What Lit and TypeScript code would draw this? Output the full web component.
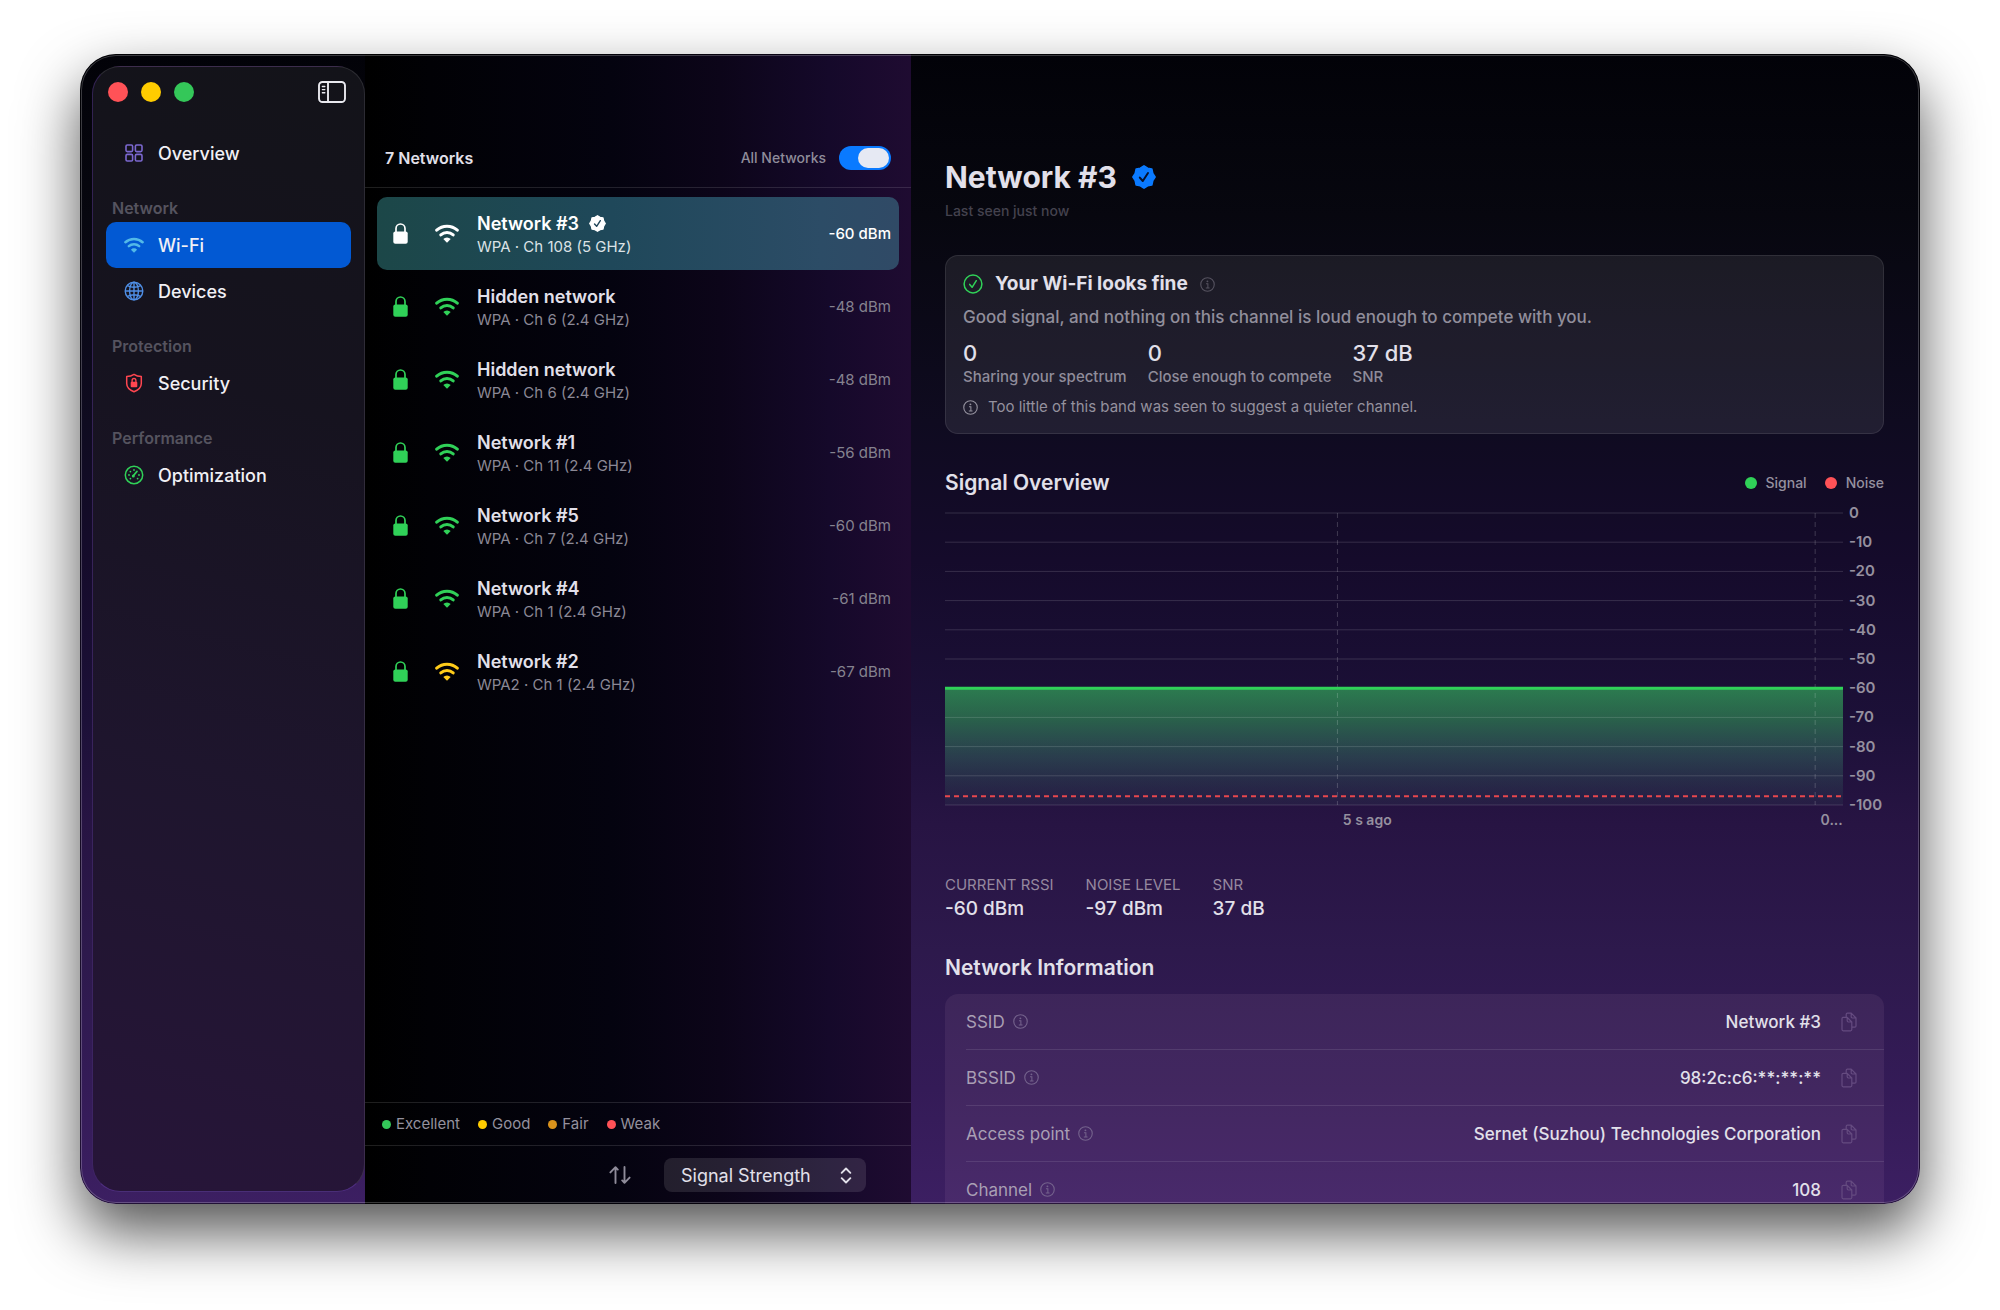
import { LitElement, html, svg, css, nothing } from "lit";
import { customElement, property, state } from "lit/decorators.js";
import { classMap } from "lit/directives/class-map.js";
import { styleMap } from "lit/directives/style-map.js";

const GREEN = "#30d158";
const YELLOW = "#ffcc1a";
const ORANGE = "#d9921c";
const RED = "#ff5257";

/** Eight-lobed rosette outline centred on (12, 12). */
const rosette = Array.from({ length: 16 }, (_, i) => {
  const radius = i % 2 ? 9.4 : 11;
  const angle = (i * Math.PI) / 8;
  return `${(12 + radius * Math.sin(angle)).toFixed(2)},${(12 - radius * Math.cos(angle)).toFixed(2)}`;
}).join(" ");

const icons = {
  grid: {
    box: "0 0 20 20",
    art: svg`<g fill="none" stroke="currentColor" stroke-width="1.6"><rect x="2" y="2" width="6.6" height="6.6" rx="1.3"/><rect x="11.4" y="2" width="6.6" height="6.6" rx="1.3"/><rect x="2" y="11.4" width="6.6" height="6.6" rx="1.3"/><rect x="11.4" y="11.4" width="6.6" height="6.6" rx="1.3"/></g>`,
  },
  wifi: {
    box: "0 0 24 19",
    art: svg`<g fill="none" stroke="currentColor" stroke-width="3" stroke-linecap="round"><path d="M1.7 6.2A15.2 15.2 0 0 1 22.3 6.2"/><path d="M5.8 10.9A9.2 9.2 0 0 1 18.2 10.9"/></g><path fill="currentColor" d="M12 18.7 8.3 15.1A5 5 0 0 1 15.7 15.1Z"/>`,
  },
  globe: {
    box: "0 0 20 20",
    art: svg`<g fill="none" stroke="currentColor" stroke-width="1.4"><circle cx="10" cy="10" r="8.8"/><path d="M10 1.2V18.8M1.2 10H18.8M3.4 4.6Q10 8 16.6 4.6M3.4 15.4Q10 12 16.6 15.4"/><ellipse cx="10" cy="10" rx="4.4" ry="8.8"/></g>`,
  },
  shield: {
    box: "0 0 20 20",
    art: svg`<path fill="none" stroke="currentColor" stroke-width="1.5" stroke-linejoin="round" d="M10 1.4C12 2.8 14.6 3.5 17.3 3.5V10.5C17.3 14.8 14 17.2 10 18.8C6 17.2 2.7 14.8 2.7 10.5V3.5C5.4 3.5 8 2.8 10 1.4Z"/><rect x="6.7" y="8.8" width="6.6" height="5.4" rx="0.9" fill="currentColor"/><path fill="none" stroke="currentColor" stroke-width="1.3" d="M8.1 9V7.4A1.9 1.9 0 0 1 11.9 7.4V9"/>`,
  },
  gauge: {
    box: "0 0 20 20",
    art: svg`<circle cx="10" cy="10" r="8.7" fill="none" stroke="currentColor" stroke-width="1.5"/><path stroke="currentColor" stroke-width="1.7" stroke-linecap="round" d="M9.3 10.8 13 6.4"/><circle cx="9.3" cy="11" r="1.5" fill="currentColor"/><g fill="currentColor"><circle cx="5" cy="10" r="0.9"/><circle cx="6.4" cy="6.6" r="0.9"/><circle cx="10" cy="5" r="0.9"/><circle cx="15" cy="10" r="0.9"/><circle cx="6.4" cy="13.6" r="0.9"/><circle cx="13.6" cy="13.6" r="0.9"/></g>`,
  },
  panel: {
    box: "0 0 28 22",
    art: svg`<g fill="none" stroke="currentColor" stroke-width="1.9"><rect x="1" y="1" width="26" height="20" rx="3.5"/><path d="M10 1V21"/></g><path stroke="currentColor" stroke-width="1.4" stroke-linecap="round" d="M4.4 5.5H6.8M4.4 8.6H6.8M4.4 11.7H6.8"/>`,
  },
  lock: {
    box: "0 0 15 21",
    art: svg`<rect x="0.3" y="8.6" width="14.4" height="12.2" rx="2" fill="currentColor"/><path fill="none" stroke="currentColor" stroke-width="1.7" d="M3 9V5.6A4.5 4.6 0 0 1 12 5.6V9"/>`,
  },
  verified: {
    box: "0 0 24 24",
    art: svg`<polygon points=${rosette} fill="currentColor" stroke="currentColor" stroke-width="1.8" stroke-linejoin="round"/><path class="tick" fill="none" stroke-width="2" stroke-linecap="round" stroke-linejoin="round" d="M7.8 12.6 10.8 16 16 8"/>`,
  },
  check: {
    box: "0 0 20 20",
    art: svg`<g fill="none" stroke="currentColor" stroke-width="1.5" stroke-linecap="round" stroke-linejoin="round"><circle cx="10" cy="10" r="8.9"/><path d="M6.7 10.4 9.1 13.3 13.3 6.7"/></g>`,
  },
  info: {
    box: "0 0 16 16",
    art: svg`<circle cx="8" cy="8" r="7.2" fill="none" stroke="currentColor" stroke-width="1.2"/><circle cx="7.9" cy="4.6" r="1" fill="currentColor"/><path fill="none" stroke="currentColor" stroke-width="1.1" d="M6.4 7.1H8.4V11.6M6.2 11.7H10.2"/>`,
  },
  copy: {
    box: "0 0 16 20",
    art: svg`<g fill="none" stroke="currentColor" stroke-width="1.2" stroke-linejoin="round"><path d="M4.5 5.3H2.2Q1 5.3 1 6.5V17.6Q1 18.8 2.2 18.8H9.6Q10.8 18.8 10.8 17.6V15.2M4.5 5.3H6.2L10.8 10V15.2M6.2 5.3V8.8Q6.2 10 7.4 10H10.8"/><path d="M5.2 5V2.4Q5.2 1.2 6.4 1.2H10.2L15 6V14Q15 15.2 13.8 15.2H11M10.2 1.2V4.8Q10.2 6 11.4 6H15"/></g>`,
  },
  sort: {
    box: "0 0 22 18",
    art: svg`<g fill="none" stroke="currentColor" stroke-width="1.9" stroke-linecap="round" stroke-linejoin="round"><path d="M6.5 17V1.4M1.4 6.4 6.5 1.2 8.8 3.6M15.5 1V16.6M13.2 14.4 15.5 16.8 20.6 11.6"/></g>`,
  },
  updown: {
    box: "0 0 12 18",
    art: svg`<path fill="none" stroke="currentColor" stroke-width="2" stroke-linecap="round" stroke-linejoin="round" d="M1.4 6.2 6 1.6 10.6 6.2M1.4 11.8 6 16.4 10.6 11.8"/>`,
  },
};

type IconName = keyof typeof icons;

const icon = (name: IconName, cls: string) =>
  html`<svg class="icon ${cls}" viewBox=${icons[name].box} aria-hidden="true">${icons[name].art}</svg>`;

const shared = css`
  *,
  *::before,
  *::after {
    box-sizing: border-box;
  }
  h1, h2, h3, p, ul, dl, dd {
    margin: 0;
    padding: 0;
  }
  ul {
    list-style: none;
  }
  button, select, input {
    font: inherit;
    color: inherit;
    margin: 0;
  }
  button {
    display: block;
    background: none;
    border: 0;
    padding: 0;
    text-align: left;
  }
  a {
    color: inherit;
    text-decoration: none;
  }
  .icon {
    display: block;
    flex: none;
  }
  .dot {
    border-radius: 50%;
    flex: none;
  }
`;

interface NavItem {
  label: string;
  icon: IconName;
  color: string;
}

const navSections: { title?: string; items: NavItem[] }[] = [
  { items: [{ label: "Overview", icon: "grid", color: "#7b68d0" }] },
  {
    title: "Network",
    items: [
      { label: "Wi-Fi", icon: "wifi", color: "#52b9e8" },
      { label: "Devices", icon: "globe", color: "#4f8fe6" },
    ],
  },
  { title: "Protection", items: [{ label: "Security", icon: "shield", color: "#ff4650" }] },
  { title: "Performance", items: [{ label: "Optimization", icon: "gauge", color: GREEN }] },
];

@customElement("app-sidebar")
class AppSidebar extends LitElement {
  @state() private current = "Wi-Fi";

  static styles = [
    shared,
    css`
      :host {
        display: flex;
        flex-direction: column;
        margin: 12px 0 12px 12px;
        padding: 14px 13px;
        border: 1px solid #ffffff1c;
        border-left-color: #6a3fb060;
        border-bottom-color: #6a3fb0a0;
        border-radius: 28px;
        background: linear-gradient(195deg, #131319 0%, #16131f 30%, #1e152d 62%, #271539 100%);
      }
      .top {
        display: flex;
        align-items: center;
        gap: 13px;
        padding: 0 5px 0 2px;
        margin-bottom: 27px;
      }
      .light {
        width: 20px;
        height: 20px;
        border-radius: 50%;
      }
      .close { background: #ff5257; }
      .minimize { background: #ffcc00; }
      .zoom { background: #34c759; }
      .toggle {
        margin-left: auto;
        color: #e9e9ef;
      }
      .panel {
        width: 28px;
        height: 22px;
      }
      .title {
        display: flex;
        align-items: center;
        height: 46px;
        padding: 17px 6px 0;
        font-size: 16px;
        font-weight: 600;
        color: #55535f;
      }
      .item {
        display: flex;
        align-items: center;
        gap: 14px;
        height: 46px;
        padding: 0 18px;
        border-radius: 10px;
        font-size: 18px;
        font-weight: 500;
        color: #f1f0f5;
      }
      .item.current {
        background: #0259d3;
      }
      .item .icon {
        width: 20px;
        height: 20px;
      }
    `,
  ];

  render() {
    return html`
      <div class="top">
        <button class="light close" aria-label="Close"></button>
        <button class="light minimize" aria-label="Minimize"></button>
        <button class="light zoom" aria-label="Zoom"></button>
        <button class="toggle" aria-label="Toggle sidebar">${icon("panel", "panel")}</button>
      </div>
      <nav>
        ${navSections.map(
          (section) => html`
            ${section.title ? html`<h2 class="title">${section.title}</h2>` : nothing}
            <ul>
              ${section.items.map(
                (item) => html`<li>
                  <a
                    href="#"
                    class="item ${classMap({ current: item.label === this.current })}"
                    @click=${(e: Event) => {
                      e.preventDefault();
                      this.current = item.label;
                    }}
                  >
                    <span style=${styleMap({ color: item.color })}>${icon(item.icon, "")}</span>
                    ${item.label}
                  </a>
                </li>`
              )}
            </ul>
          `
        )}
      </nav>
    `;
  }
}

interface Network {
  name: string;
  detail: string;
  rssi: string;
  color: string;
  verified?: boolean;
}

const networks: Network[] = [
  { name: "Network #3", detail: "WPA · Ch 108 (5 GHz)", rssi: "-60 dBm", color: GREEN, verified: true },
  { name: "Hidden network", detail: "WPA · Ch 6 (2.4 GHz)", rssi: "-48 dBm", color: GREEN },
  { name: "Hidden network", detail: "WPA · Ch 6 (2.4 GHz)", rssi: "-48 dBm", color: GREEN },
  { name: "Network #1", detail: "WPA · Ch 11 (2.4 GHz)", rssi: "-56 dBm", color: GREEN },
  { name: "Network #5", detail: "WPA · Ch 7 (2.4 GHz)", rssi: "-60 dBm", color: GREEN },
  { name: "Network #4", detail: "WPA · Ch 1 (2.4 GHz)", rssi: "-61 dBm", color: GREEN },
  { name: "Network #2", detail: "WPA2 · Ch 1 (2.4 GHz)", rssi: "-67 dBm", color: YELLOW },
];

const quality = [
  { label: "Excellent", color: "#34c759" },
  { label: "Good", color: "#ffcc00" },
  { label: "Fair", color: ORANGE },
  { label: "Weak", color: RED },
];

@customElement("network-list")
class NetworkList extends LitElement {
  @state() private selected = 0;

  static styles = [
    shared,
    css`
      :host {
        display: flex;
        flex-direction: column;
        min-height: 0;
        background: linear-gradient(90deg, #000 0%, #010105 12%, #04030f 45%, #0c0519 65%, #15092a 85%, #1f0b31 100%);
        color: #e2e0ea;
      }
      header {
        display: flex;
        align-items: center;
        justify-content: space-between;
        padding: 92px 20px 17px;
        border-bottom: 1px solid #ffffff1f;
        line-height: 24px;
      }
      h2 {
        font-size: 16px;
        font-weight: 600;
      }
      .all {
        display: flex;
        align-items: center;
        gap: 13px;
        font-size: 14px;
        font-weight: 500;
        color: #8f8c9a;
      }
      .switch {
        appearance: none;
        width: 52px;
        height: 24px;
        padding: 2px;
        border-radius: 12px;
        background: #3a3842;
        display: flex;
      }
      .switch:checked {
        background: #0a7aff;
        justify-content: flex-end;
      }
      .switch::before {
        content: "";
        width: 31px;
        border-radius: 10px;
        background: #e6e9f3;
      }
      .rows {
        flex: 1;
        padding: 9px 12px;
      }
      .row {
        display: grid;
        grid-template-columns: 42px 42px 1fr auto;
        align-items: center;
        width: 100%;
        height: 73px;
        padding: 0 8px 0 16px;
        border-radius: 10px;
      }
      .lock {
        width: 15px;
        height: 21px;
        color: #30d158;
      }
      .wifi {
        width: 24px;
        height: 19px;
      }
      .text {
        padding-top: 2px;
      }
      .name {
        display: flex;
        align-items: center;
        gap: 10px;
        font-size: 18px;
        font-weight: 600;
        line-height: 23px;
      }
      .badge {
        width: 17px;
        height: 17px;
      }
      .tick {
        stroke: #22465a;
      }
      .detail {
        display: block;
        font-size: 15px;
        line-height: 23px;
        color: #8b8895;
      }
      .rssi {
        font-size: 15px;
        color: #85828f;
      }
      .row.selected {
        background: linear-gradient(90deg, #1c4748, #1f485a 45%, #2c4c66 85%, #304a66);
        color: #fff;
      }
      .row.selected .lock {
        color: #fff;
      }
      .row.selected .detail {
        color: #dbe2e6;
      }
      .row.selected .rssi {
        color: #fff;
        font-weight: 500;
      }
      .legend {
        display: flex;
        gap: 18px;
        padding: 0 17px;
        border-top: 1px solid #ffffff1f;
        border-bottom: 1px solid #ffffff1f;
        font-size: 15px;
        line-height: 42px;
        color: #94919e;
      }
      .legend li {
        display: flex;
        align-items: center;
        gap: 5px;
      }
      .dot {
        width: 9px;
        height: 9px;
      }
      .sorting {
        display: flex;
        align-items: center;
        justify-content: flex-end;
        gap: 33px;
        height: 58px;
        padding-right: 45px;
      }
      .sort {
        width: 22px;
        height: 18px;
        color: #8f8c9a;
      }
      .picker {
        position: relative;
      }
      select {
        appearance: none;
        display: block;
        width: 202px;
        height: 34px;
        padding: 0 32px 0 17px;
        border: 0;
        border-radius: 8px;
        background: #ffffff1c;
        font-size: 18px;
        color: #e2e0ea;
      }
      .updown {
        position: absolute;
        right: 14px;
        top: 9px;
        width: 12px;
        height: 17px;
        pointer-events: none;
      }
    `,
  ];

  render() {
    return html`
      <header>
        <h2>7 Networks</h2>
        <label class="all">All Networks<input class="switch" type="checkbox" role="switch" checked /></label>
      </header>
      <ul class="rows">
        ${networks.map((n, i) => {
          const selected = i === this.selected;
          return html`<li>
            <button class="row ${classMap({ selected })}" @click=${() => (this.selected = i)}>
              ${icon("lock", "lock")}
              <span style=${styleMap({ color: selected ? "#fff" : n.color })}>${icon("wifi", "wifi")}</span>
              <span class="text">
                <span class="name">${n.name}${n.verified ? icon("verified", "badge") : nothing}</span>
                <span class="detail">${n.detail}</span>
              </span>
              <span class="rssi">${n.rssi}</span>
            </button>
          </li>`;
        })}
      </ul>
      <ul class="legend">
        ${quality.map(
          (q) => html`<li><span class="dot" style=${styleMap({ background: q.color })}></span>${q.label}</li>`
        )}
      </ul>
      <div class="sorting">
        <button aria-label="Reverse order">${icon("sort", "sort")}</button>
        <div class="picker">
          <select aria-label="Sort by">
            <option>Signal Strength</option>
            <option>Name</option>
          </select>
          ${icon("updown", "updown")}
        </div>
      </div>
    `;
  }
}

@customElement("signal-chart")
class SignalChart extends LitElement {
  @property({ type: Number }) signal = -60;
  @property({ type: Number }) noise = -97;

  private levels = Array.from({ length: 11 }, (_, i) => -10 * i);

  static styles = [
    shared,
    css`
      :host {
        display: grid;
        grid-template-columns: 1fr auto;
        column-gap: 6px;
        font-size: 15px;
        font-weight: 600;
        line-height: 20px;
        color: #95909f;
      }
      .plot {
        display: block;
        width: 100%;
        height: 292px;
        overflow: visible;
      }
      .levels {
        display: flex;
        flex-direction: column;
        justify-content: space-between;
        min-width: 35px;
        margin: -10px 0;
      }
      .times {
        display: grid;
        grid-template-columns: 44.3% 53.2% auto;
        margin-top: 5px;
        white-space: nowrap;
        font-size: 14px;
      }
      .five {
        grid-column: 2;
      }
      .rule {
        stroke: #ffffff24;
      }
      .mark {
        stroke: #ffffff30;
        stroke-dasharray: 5 4;
      }
      .signal {
        stroke: #30d158;
        stroke-width: 3;
      }
      .noise {
        stroke: #e8474d;
        stroke-width: 2;
        stroke-dasharray: 5 4;
      }
    `,
  ];

  render() {
    const pct = (v: number) => `${-v}%`;
    return html`
      <svg class="plot" role="img" aria-label="Signal and noise over time">
        <defs>
          <linearGradient id="fill" x1="0" y1="0" x2="0" y2="1">
            <stop offset="0" stop-color="#3ad465" stop-opacity="0.55" />
            <stop offset="0.25" stop-color="#3ac862" stop-opacity="0.45" />
            <stop offset="0.6" stop-color="#44b07a" stop-opacity="0.27" />
            <stop offset="1" stop-color="#3a8a70" stop-opacity="0.08" />
          </linearGradient>
        </defs>
        <rect x="0" y=${pct(this.signal)} width="100%" height=${`${100 + this.signal}%`} fill="url(#fill)" />
        ${this.levels.map((l) => svg`<line class="rule" x1="0" x2="100%" y1=${pct(l)} y2=${pct(l)} />`)}
        ${[43.7, 96.9].map((x) => svg`<line class="mark" x1="${x}%" x2="${x}%" y1="0" y2="100%" />`)}
        <line class="signal" x1="0" x2="100%" y1=${pct(this.signal)} y2=${pct(this.signal)} />
        <line class="noise" x1="0" x2="100%" y1=${pct(this.noise)} y2=${pct(this.noise)} />
      </svg>
      <div class="levels">${this.levels.map((l) => html`<span>${l}</span>`)}</div>
      <div class="times"><span class="five">5 s ago</span><span>0...</span></div>
    `;
  }
}

const verdict = [
  { value: "0", label: "Sharing your spectrum" },
  { value: "0", label: "Close enough to compete" },
  { value: "37 dB", label: "SNR" },
];

const readings = [
  { label: "CURRENT RSSI", value: "-60 dBm" },
  { label: "NOISE LEVEL", value: "-97 dBm" },
  { label: "SNR", value: "37 dB" },
];

const facts = [
  { label: "SSID", value: "Network #3" },
  { label: "BSSID", value: "98:2c:c6:**:**:**" },
  { label: "Access point", value: "Sernet (Suzhou) Technologies Corporation" },
  { label: "Channel", value: "108" },
];

@customElement("network-detail")
class NetworkDetail extends LitElement {
  static styles = [
    shared,
    css`
      :host {
        display: block;
        min-width: 0;
        min-height: 0;
        overflow: hidden;
        padding: 105px 36px 0 34px;
        color: #e2e0ea;
      }
      h1 {
        display: flex;
        align-items: center;
        gap: 15px;
        font-size: 30px;
        font-weight: 700;
        line-height: 36px;
      }
      .badge {
        width: 24px;
        height: 24px;
        color: #0a7aff;
      }
      .tick {
        stroke: #07122c;
      }
      .seen {
        margin-top: 6px;
        font-size: 14px;
        font-weight: 500;
        line-height: 20px;
        color: #44424e;
      }
      .verdict {
        margin-top: 34px;
        padding: 16px 17px;
        border: 1px solid #ffffff17;
        border-radius: 13px;
        background: #ffffff14;
      }
      h3 {
        display: flex;
        align-items: center;
        gap: 12px;
        font-size: 19px;
        font-weight: 700;
        line-height: 24px;
      }
      .check {
        width: 20px;
        height: 20px;
        color: #30d158;
      }
      .info {
        width: 15px;
        height: 15px;
      }
      .faint {
        color: #55525f;
      }
      .summary {
        margin-top: 10px;
        font-size: 17px;
        font-weight: 500;
        line-height: 22px;
        color: #918e9b;
      }
      .metrics {
        display: flex;
        gap: 21px;
        margin-top: 12px;
      }
      .metrics > div {
        display: flex;
        flex-direction: column-reverse;
      }
      .metrics dt {
        font-size: 15px;
        font-weight: 500;
        line-height: 20px;
        color: #8f8c9a;
      }
      .metrics dd {
        font-size: 22px;
        font-weight: 500;
        line-height: 27px;
      }
      .note {
        display: flex;
        align-items: center;
        gap: 10px;
        margin-top: 10px;
        font-size: 15px;
        line-height: 20px;
        color: #94919e;
      }
      .bar {
        display: flex;
        align-items: center;
        justify-content: space-between;
        margin: 35px 0 16px;
      }
      h2 {
        font-size: 21px;
        font-weight: 600;
        line-height: 28px;
      }
      .keys {
        display: flex;
        gap: 18px;
        font-size: 14px;
        font-weight: 500;
        line-height: 20px;
        color: #95909f;
      }
      .keys li {
        display: flex;
        align-items: center;
        gap: 9px;
      }
      .dot {
        width: 12px;
        height: 12px;
      }
      .dot.green { background: #30d158; }
      .dot.red { background: #ff5257; }
      .readings {
        display: flex;
        gap: 32px;
        margin: 45px 0 33px;
      }
      .readings > div {
        display: flex;
        flex-direction: column;
        gap: 2px;
      }
      .readings dt {
        font-size: 15px;
        line-height: 20px;
        color: #95889f;
      }
      .readings dd {
        font-size: 19px;
        font-weight: 500;
        line-height: 24px;
      }
      .facts {
        margin-top: 12px;
        padding-left: 21px;
        border-radius: 13px;
        background: #ffc4e812;
      }
      table {
        width: 100%;
        border-spacing: 0;
        font-size: 17px;
        line-height: 24px;
      }
      th, td {
        height: 56px;
        padding: 0;
        border-bottom: 1px solid #ffffff1a;
        font-weight: 500;
      }
      th {
        text-align: left;
        font-weight: 400;
        color: #a99fb4;
      }
      .term {
        display: flex;
        align-items: center;
        gap: 8px;
      }
      .term .info {
        color: #74628c;
      }
      .value {
        text-align: right;
      }
      .action {
        width: 63px;
        padding: 0 27px 0 20px;
        color: #654b80;
      }
      .copy {
        width: 16px;
        height: 20px;
      }
    `,
  ];

  render() {
    return html`
      <h1>Network #3 ${icon("verified", "badge")}</h1>
      <p class="seen">Last seen just now</p>

      <section class="verdict">
        <h3>
          ${icon("check", "check")} Your Wi-Fi looks fine
          <button class="faint" aria-label="About this verdict">${icon("info", "info")}</button>
        </h3>
        <p class="summary">Good signal, and nothing on this channel is loud enough to compete with you.</p>
        <dl class="metrics">
          ${verdict.map((m) => html`<div><dt>${m.label}</dt><dd>${m.value}</dd></div>`)}
        </dl>
        <p class="note">${icon("info", "info")}Too little of this band was seen to suggest a quieter channel.</p>
      </section>

      <div class="bar">
        <h2>Signal Overview</h2>
        <ul class="keys">
          <li><span class="dot green"></span>Signal</li>
          <li><span class="dot red"></span>Noise</li>
        </ul>
      </div>
      <signal-chart></signal-chart>

      <dl class="readings">
        ${readings.map((r) => html`<div><dt>${r.label}</dt><dd>${r.value}</dd></div>`)}
      </dl>

      <h2>Network Information</h2>
      <div class="facts">
        <table>
          ${facts.map(
            (f) => html`<tr>
              <th scope="row">
                <span class="term">${f.label}<button aria-label="About ${f.label}">${icon("info", "info")}</button></span>
              </th>
              <td class="value">${f.value}</td>
              <td class="action"><button aria-label="Copy ${f.label}">${icon("copy", "copy")}</button></td>
            </tr>`
          )}
        </table>
      </div>
    `;
  }
}

@customElement("app-root")
class AppRoot extends LitElement {
  static styles = [
    shared,
    css`
      :host {
        display: block;
        box-sizing: border-box;
        height: 100vh;
        padding: 54px 80px 106px;
        background: #fff;
        overflow: hidden;
        font-family: Inter, "Liberation Sans", sans-serif;
      }
      .window {
        position: relative;
        display: grid;
        grid-template-columns: 285px 546px minmax(0, 1fr);
        grid-template-rows: minmax(0, 1fr);
        height: 100%;
        overflow: hidden;
        border-radius: 36px;
        background: linear-gradient(
          180deg,
          #020208 0%,
          #07070f 14%,
          #0f0b20 32%,
          #150b2b 44%,
          #1c1038 58%,
          #271443 67%,
          #2d194c 78%,
          #341b57 90%,
          #3c1f62 100%
        );
        box-shadow: 0 28px 60px #000000ad;
      }
      .window::after {
        content: "";
        position: absolute;
        inset: 0;
        border: 1px solid #00000070;
        border-radius: 36px;
        box-shadow: inset 0 0 0 1px #ffffff38;
        pointer-events: none;
      }
    `,
  ];

  render() {
    return html`
      <main class="window">
        <app-sidebar></app-sidebar>
        <network-list></network-list>
        <network-detail></network-detail>
      </main>
    `;
  }
}
